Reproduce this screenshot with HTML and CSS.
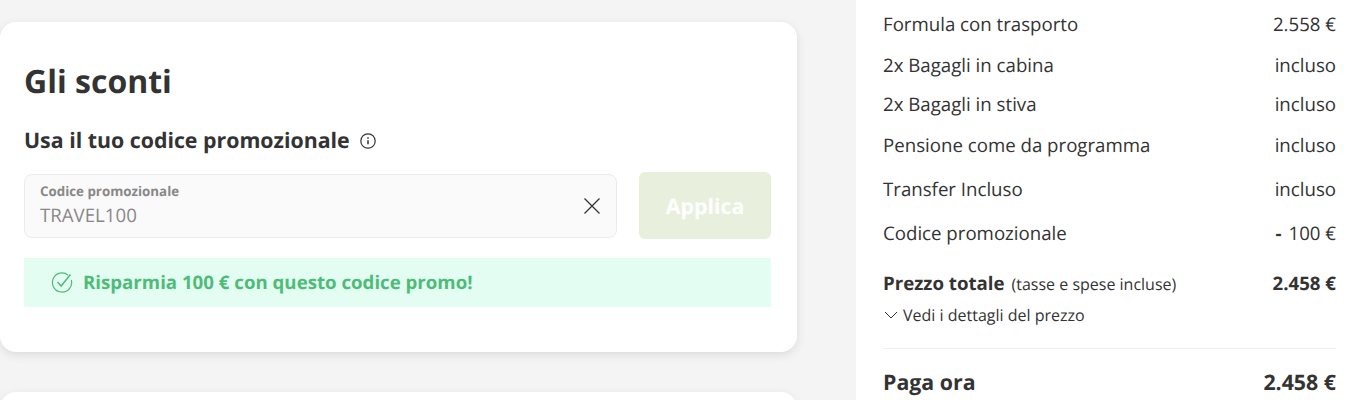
FILE: index.html
```html
<!DOCTYPE html>
<html lang="it">
<head>
<meta charset="utf-8">
<title>Gli sconti</title>
<link rel="stylesheet" href="styles.css">
</head>
<body>
<div class="page">
  <main class="main">
    <section class="card">
      <h2 class="title">Gli sconti</h2>
      <h3 class="subtitle">Usa il tuo codice promozionale
        <svg class="info" width="16" height="16" viewBox="0 0 16 16" fill="none" stroke="#333" stroke-width="1.2"><circle cx="8" cy="8" r="7.2"/><path d="M8 7.2v4" stroke-width="1.5"/><path d="M8 4.3v1.5" stroke-width="1.5"/></svg>
      </h3>
      <div class="promo">
        <div class="field">
          <div class="field-text">
            <span class="field-label">Codice promozionale</span>
            <span class="field-value">TRAVEL100</span>
          </div>
          <svg class="clear" width="18" height="18" viewBox="0 0 18 18" fill="none" stroke="#333" stroke-width="1.3"><path d="M1.5 1.5l15 15M16.5 1.5l-15 15"/></svg>
        </div>
        <button class="apply" type="button">Applica</button>
      </div>
      <div class="notice">
        <svg width="22" height="22" viewBox="0 0 22 22" fill="none" stroke="#4fbb78" stroke-width="1.2"><path d="M17.2 4.1A9.6 9.6 0 1 0 20.3 9"/><path d="M6.5 11l3.6 4 9.4-11.5" stroke-width="1.5"/></svg>
        <span>Risparmia 100 € con questo codice promo!</span>
      </div>
    </section>
    <section class="card card-next"></section>
  </main>
  <aside class="side">
    <div class="row row-a"><span>Formula con trasporto</span><span>2.558 €</span></div>
    <div class="row row-b"><span>2x Bagagli in cabina</span><span>incluso</span></div>
    <div class="row row-c"><span>2x Bagagli in stiva</span><span>incluso</span></div>
    <div class="row row-d"><span>Pensione come da programma</span><span>incluso</span></div>
    <div class="row row-e"><span>Transfer Incluso</span><span>incluso</span></div>
    <div class="row row-e"><span>Codice promozionale</span><span><b class="minus">-</b> 100 €</span></div>
    <div class="row row-total"><span class="total-label"><b>Prezzo totale</b><small class="tax">(tasse e spese incluse)</small></span><b>2.458 €</b></div>
    <div class="details">
      <svg width="14" height="8" viewBox="0 0 14 8" fill="none" stroke="#333" stroke-width="1"><path d="M1 1l6 6 6-6"/></svg>
      <span>Vedi i dettagli del prezzo</span>
    </div>
    <div class="row row-pay"><b>Paga ora</b><b>2.458 €</b></div>
  </aside>
</div>
</body>
</html>
```

FILE: styles.css
```css
* { box-sizing: border-box; }
html, body { margin: 0; height: 400px; overflow: hidden; }
body { background: #f4f4f4; font-family: "Open Sans", sans-serif; color: #333; text-rendering: geometricPrecision; }
.page { display: flex; height: 400px; overflow: hidden; }
.main { width: 856px; flex: none; padding: 22px 59px 0 0; }
.card { background: #fff; border-radius: 16px; box-shadow: 0 3px 10px rgba(0,0,0,.1); padding: 40px 26px 45px 24px; height: 330px; }
.card-next { margin-top: 40px; height: 200px; }
.title { margin: 0; font-size: 32px; line-height: 40px; font-weight: 700; }
.subtitle { margin: 25px 0 0; font-size: 21.33px; line-height: 28px; font-weight: 700; display: flex; align-items: center; gap: 10px; }
.info { flex: none; }
.promo { display: flex; gap: 22px; margin-top: 17px; align-items: center; }
.field { flex: 1; height: 64px; background: #fafafa; border: 1px solid #ebebeb; border-radius: 8px; padding: 0 15px; display: flex; align-items: center; justify-content: space-between; }
.field-text { display: flex; flex-direction: column; margin-top: 1px; }
.field-label { font-size: 13.33px; line-height: 17px; font-weight: 700; color: #888; }
.field-value { font-size: 18.67px; line-height: 27px; margin-top: 2px; color: #888; }
.clear { flex: none; }
.apply { width: 132px; height: 67px; border: 0; border-radius: 6px; background: #e8f0dd; color: #fff; font: 700 21.33px "Open Sans", sans-serif; padding: 2px 0 0; text-rendering: geometricPrecision; }
.notice { height: 49px; margin-top: 19px; background: #e3fdf2; display: flex; align-items: center; gap: 10px; padding-left: 27px; padding-bottom: 1px; color: #4fbb78; font-size: 18.67px; font-weight: 700; }
.side { flex: 1; background: #fff; padding: 0 26px 0 27px; font-size: 18.67px; }
.row { display: flex; justify-content: space-between; align-items: center; line-height: 24px; }
.row-a { margin-top: 13px; }
.row-b { margin-top: 17px; }
.row-c { margin-top: 15px; }
.row-d { margin-top: 17px; }
.row-e { margin-top: 20px; }
.minus { font-weight: 700; margin-right: 2px; }
.row-total { margin-top: 26px; }
.total-label { display: flex; align-items: baseline; }
.tax { font-size: 16px; margin-left: 7px; }
.details { display: flex; align-items: center; gap: 5px; margin-top: 8px; font-size: 16px; line-height: 22px; padding-bottom: 22px; border-bottom: 1px solid #f0f0f0; }
.details svg { margin-left: 1px; }
.row-pay { margin-top: 20px; font-size: 21.33px; line-height: 28px; }
```
